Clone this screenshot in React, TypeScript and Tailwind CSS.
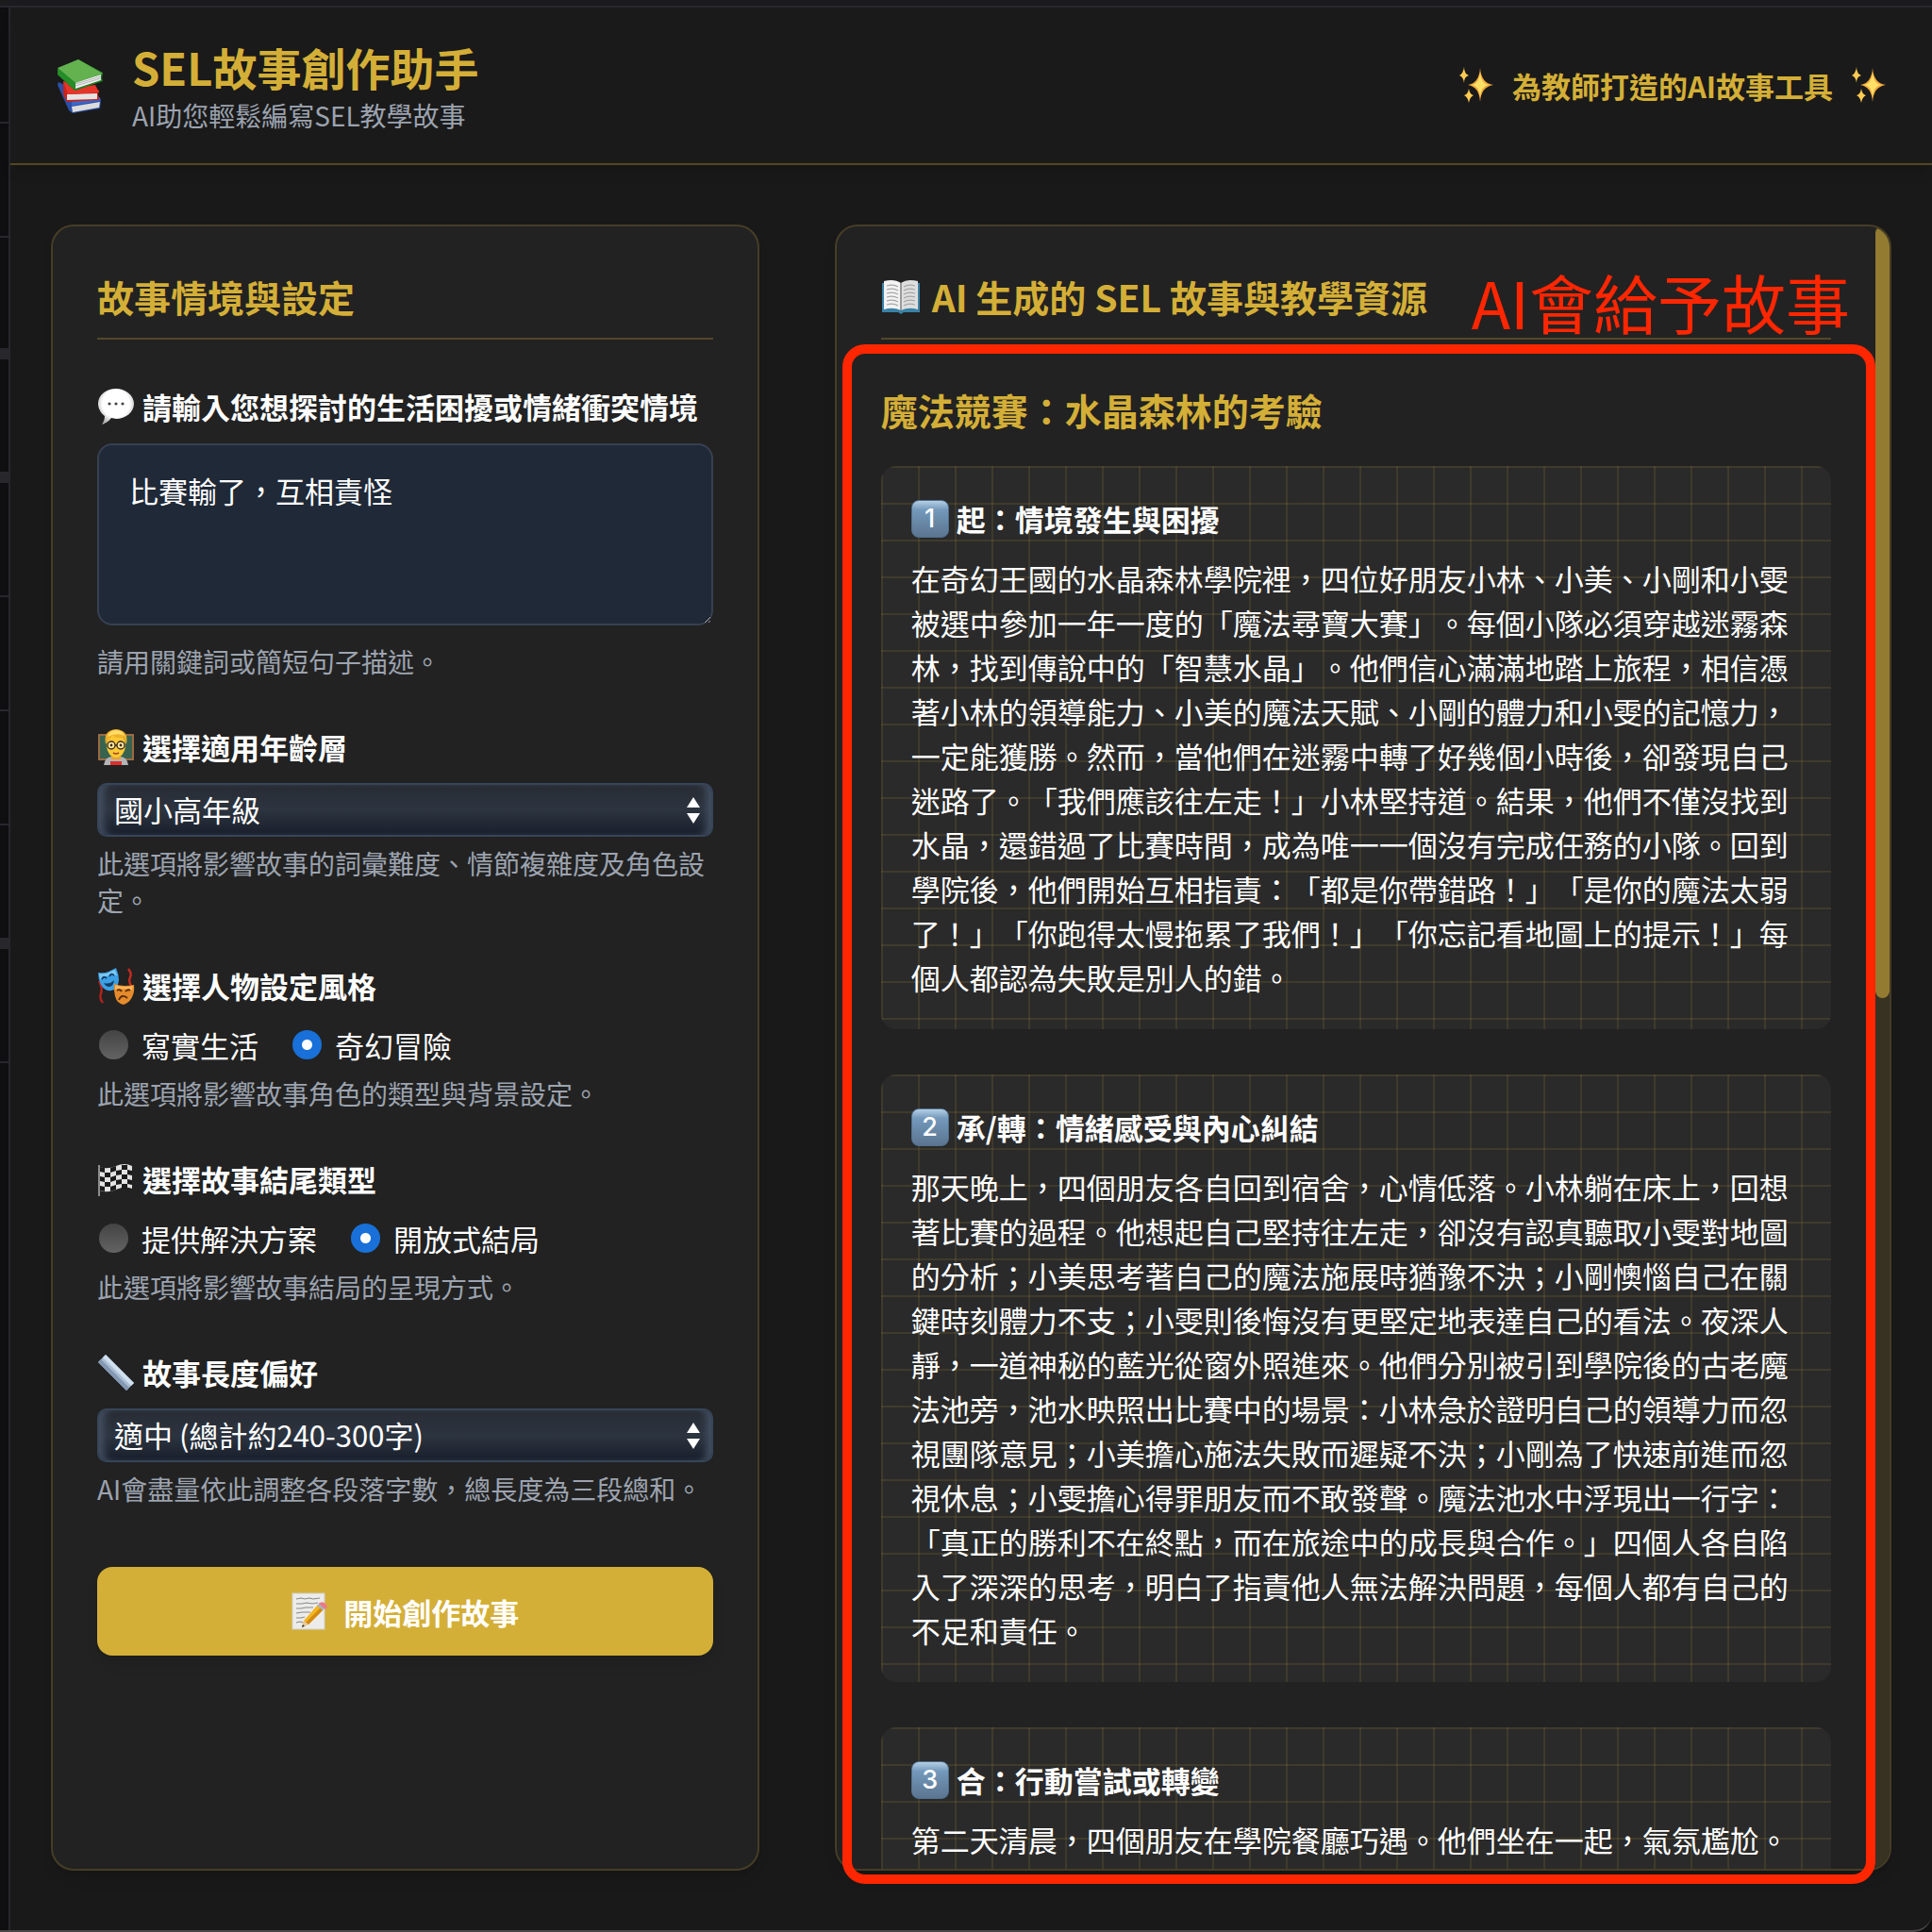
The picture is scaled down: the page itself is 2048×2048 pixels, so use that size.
import React, { useState } from 'react';

interface StorySection {
    step: string;
    title: string;
    content: string;
}

interface RadioOption {
    value: string;
    label: string;
}

const storySections: StorySection[] = [
    {
        step: '1',
        title: '起：情境發生與困擾',
        content:
            '在奇幻王國的水晶森林學院裡，四位好朋友小林、小美、小剛和小雯被選中參加一年一度的「魔法尋寶大賽」。每個小隊必須穿越迷霧森林，找到傳說中的「智慧水晶」。他們信心滿滿地踏上旅程，相信憑著小林的領導能力、小美的魔法天賦、小剛的體力和小雯的記憶力，一定能獲勝。然而，當他們在迷霧中轉了好幾個小時後，卻發現自己迷路了。「我們應該往左走！」小林堅持道。結果，他們不僅沒找到水晶，還錯過了比賽時間，成為唯一一個沒有完成任務的小隊。回到學院後，他們開始互相指責：「都是你帶錯路！」「是你的魔法太弱了！」「你跑得太慢拖累了我們！」「你忘記看地圖上的提示！」每個人都認為失敗是別人的錯。',
    },
    {
        step: '2',
        title: '承/轉：情緒感受與內心糾結',
        content:
            '那天晚上，四個朋友各自回到宿舍，心情低落。小林躺在床上，回想著比賽的過程。他想起自己堅持往左走，卻沒有認真聽取小雯對地圖的分析；小美思考著自己的魔法施展時猶豫不決；小剛懊惱自己在關鍵時刻體力不支；小雯則後悔沒有更堅定地表達自己的看法。夜深人靜，一道神秘的藍光從窗外照進來。他們分別被引到學院後的古老魔法池旁，池水映照出比賽中的場景：小林急於證明自己的領導力而忽視團隊意見；小美擔心施法失敗而遲疑不決；小剛為了快速前進而忽視休息；小雯擔心得罪朋友而不敢發聲。魔法池水中浮現出一行字：「真正的勝利不在終點，而在旅途中的成長與合作。」四個人各自陷入了深深的思考，明白了指責他人無法解決問題，每個人都有自己的不足和責任。',
    },
    {
        step: '3',
        title: '合：行動嘗試或轉變',
        content: '第二天清晨，四個朋友在學院餐廳巧遇。他們坐在一起，氣氛尷尬。',
    },
];

const characterStyles: RadioOption[] = [
    { value: 'real', label: '寫實生活' },
    { value: 'fantasy', label: '奇幻冒險' },
];

const endingTypes: RadioOption[] = [
    { value: 'solution', label: '提供解決方案' },
    { value: 'open', label: '開放式結局' },
];

const BooksIcon: React.FC = () => (
    <svg viewBox="0 0 58 58" className="size-[58px] shrink-0" aria-hidden="true">
        <path d="M4 25l38 17 7 2-1 9-29 5-4-3L3 28z" fill="#2c4fa8" />
        <path d="M18 51l30-5-1 6-28 5z" fill="#dcdcdc" />
        <path d="M18 50l29-5 2-2-3-3-28 5z" fill="#3a68c9" />
        <path d="M9 24l35 8 3 2-1 3 1 7-34 2-4-8z" fill="#c8231a" />
        <path d="M13 38l32-1v6l-32 1z" fill="#e4e4e4" />
        <path d="M9 24l5 14 33-2-4-8-20 3z" fill="#e5352a" />
        <path d="M3 11v6l17 16 2 1 29-10-1-3 1-6L25 1z" fill="#1f7d22" />
        <path d="M22 25l27-8v6L22 32z" fill="#eeeeee" />
        <path d="M22 27l27-8M22 29l27-8" stroke="#b5b5b5" strokeWidth="1" />
        <path d="M3 10L25 1l26 15-29 10z" fill="#63b14f" />
        <path d="M3 10l19 16-1 7L3 17z" fill="#248d27" />
    </svg>
);

const SparklesIcon: React.FC = () => (
    <svg viewBox="0 0 40 40" className="size-10 shrink-0" aria-hidden="true">
        <path d="M24 1q1 16 14 18-13 2-14 18-1-16-13-18Q23 17 24 1z" fill="#f3a83c" />
        <path d="M24 6q1 12 9 13-8 1-9 13-1-12-9-13 8-1 9-13z" fill="#ffe066" />
        <path d="M7 0q0 7 5 9-5 1-5 8-1-7-5-8 4-2 5-9z" fill="#ffcb52" />
        <path d="M12 23q1 6 5 7-4 2-5 8-1-6-5-8 4-1 5-7z" fill="#ffcb52" />
    </svg>
);

const SpeechIcon: React.FC = () => (
    <svg viewBox="0 0 40 40" className="size-10 shrink-0" aria-hidden="true">
        <defs>
            <radialGradient id="speech-fill" cx="50%" cy="42%" r="58%">
                <stop offset="0.65" stopColor="#ffffff" />
                <stop offset="1" stopColor="#b4b4b4" />
            </radialGradient>
        </defs>
        <path d="M20 1c10 0 19 7 19 16s-9 16-19 16l-5-1c-3 4-7 6-10 7 2-3 3-6 3-9C4 27 1 22 1 17 1 8 9 1 20 1z" fill="url(#speech-fill)" />
        <circle cx="13" cy="17" r="1.6" fill="#444444" />
        <circle cx="20" cy="17" r="1.6" fill="#444444" />
        <circle cx="27" cy="17" r="1.6" fill="#444444" />
    </svg>
);

const TeacherIcon: React.FC = () => (
    <svg viewBox="0 0 40 40" className="size-10 shrink-0" aria-hidden="true">
        <rect x="1" y="6" width="38" height="28" fill="#9b6b43" />
        <rect x="3" y="8" width="34" height="24" fill="#38634f" />
        <path d="M7 39q1-8 8-9h10q7 1 8 9z" fill="#b2b4b6" />
        <path d="M15 28h10v5H15z" fill="#eaa52c" />
        <path d="M14 35h12v4H14z" fill="#dd2f2b" />
        <ellipse cx="20" cy="18" rx="10" ry="13" fill="#fcc934" />
        <path d="M9 17Q6 2 20 1q14 1 11 16l-3-7q-9 1-12-3-2 5-5 6z" fill="#eeb02a" />
        <path d="M11 9q2-7 9-7 7 0 9 6-8-4-18 1z" fill="#ffdd66" />
        <circle cx="15" cy="18" r="4" fill="#ffe9a3" stroke="#3b2b1d" strokeWidth="1.4" />
        <circle cx="25" cy="18" r="4" fill="#ffe9a3" stroke="#3b2b1d" strokeWidth="1.4" />
        <path d="M19 18h2" stroke="#3b2b1d" strokeWidth="1.4" />
        <circle cx="15" cy="18" r="1.4" fill="#3b2b1d" />
        <circle cx="25" cy="18" r="1.4" fill="#3b2b1d" />
        <path d="M17 26q3 2 6 0" fill="none" stroke="#a2452a" strokeWidth="1.6" />
    </svg>
);

const MasksIcon: React.FC = () => (
    <svg viewBox="0 0 40 40" className="size-10 shrink-0" aria-hidden="true">
        <path d="M2 15q4 8 2 13t2 10" fill="none" stroke="#b5221a" strokeWidth="2.4" />
        <path d="M33 2q4 5 2 9t1 9" fill="none" stroke="#c92a1f" strokeWidth="2.4" />
        <path d="M1 6q7 1 11-1t8-4q3 7 3 13-1 10-8 11Q8 26 4 19 1 13 1 6z" fill="#3ba0e4" />
        <path d="M2 7q6 1 10-1t7-3l2 6Q11 8 3 13z" fill="#7cc9f6" />
        <path d="M5 13q2-4 5-1M13 10q2-4 5-1" fill="none" stroke="#123d66" strokeWidth="1.8" />
        <path d="M7 17q6 2 11-3-1 7-5 7t-6-4z" fill="#123d66" />
        <path d="M18 18q6 2 11 2t10-1q1 7-2 13t-9 8q-7-1-9-9-2-7-1-13z" fill="#e58b2c" />
        <path d="M19 19q6 2 10 2t9-1l-1 5q-8-3-18-1z" fill="#f8b65b" />
        <path d="M21 25q3-2 5 1M30 26q3-3 5-1M23 35q3-7 9-2" fill="none" stroke="#5b2c08" strokeWidth="1.8" />
    </svg>
);

const FlagIcon: React.FC = () => (
    <svg viewBox="0 0 40 40" className="size-10 shrink-0" aria-hidden="true">
        <path d="M2 5v33" stroke="#8d8d8d" strokeWidth="2" />
        <path d="M3 7q8 3 17-1t17 0v24q-8-3-17 1T3 32z" fill="#e2e2e2" />
        <path
            d="M3 7l5 1v5l-5-1zM14 8l6-2v5l-6 2zM26 5l6 0v5l-6 0zM8 13l6 0v5l-6 0zM20 11l6-1v5l-6 1zM32 10l5 1v5l-5-1zM3 17l5 1v5l-5-1zM14 18l6-2v5l-6 2zM26 15l6 0v5l-6 0zM8 23l6 0v5l-6 0zM20 21l6-1v5l-6 1zM32 20l5 1v5l-5-1zM3 27l5 1v5l-5-1zM14 28l6-2v5l-6 2zM26 25l6 0v5l-6 0z"
            fill="#1b1b1b"
        />
    </svg>
);

const RulerIcon: React.FC = () => (
    <svg viewBox="0 0 40 40" className="size-10 shrink-0" aria-hidden="true">
        <path d="M9 1l30 30-8 8L1 9z" fill="#a9bdd3" />
        <path d="M9 1l30 30-3 3L6 4z" fill="#cfdfee" />
        <path d="M1 9l3-3 30 30-3 3z" fill="#8398b2" />
    </svg>
);

const MemoIcon: React.FC = () => (
    <svg viewBox="0 0 40 40" className="size-10 shrink-0" aria-hidden="true">
        <rect x="2" y="1" width="34" height="38" fill="#ececea" stroke="#cfcfcc" strokeWidth="1" />
        <path d="M6 7l5-1 4 1 5-1 4 1 7-1M6 12l6 0 5-1 6 1 6-1M6 17l5 0 5-1 8 0M6 22l6-1 5 0 4 0M6 27l5 0 4-1M6 32l4-1 3 1" fill="none" stroke="#8a8a8a" strokeWidth="1.2" />
        <path d="M14 30l-2 7 7-3L35 18l-6-5z" fill="#f3b61f" />
        <path d="M16 32l16-16 3 2-16 16z" fill="#d18a12" />
        <path d="M14 30l-2 7 7-3z" fill="#e9c9a0" />
        <path d="M12 37l1-3 2 2z" fill="#333333" />
        <path d="M28 14l3-3 6 5-3 3z" fill="#a9b3bb" />
        <path d="M31 11q3-2 6 1t1 5l-1 1-7-6z" fill="#ea7b86" />
    </svg>
);

const OpenBookIcon: React.FC = () => (
    <svg viewBox="0 0 42 40" className="h-10 w-[42px] shrink-0" aria-hidden="true">
        <path d="M1 5h40v31H24l-3 2-3-2H1z" fill="#3a82a6" />
        <path d="M3 3q11-3 18 2v29q-8-4-18-1z" fill="#f3f3f3" />
        <path d="M39 3q-11-3-18 2v29q8-4 18-1z" fill="#dedede" />
        <path d="M21 5v29" stroke="#9a9a9a" strokeWidth="2" />
        <path d="M6 8q7-2 12 1M6 12q7-2 12 1M6 16q7-2 12 1M6 20q7-2 12 1M6 24q7-2 12 1M6 28q7-2 12 1M36 8q-7-2-12 1M36 12q-7-2-12 1M36 16q-7-2-12 1M36 20q-7-2-12 1M36 24q-7-2-12 1M36 28q-7-2-12 1" fill="none" stroke="#a6a6a6" strokeWidth="1.2" />
    </svg>
);

const Keycap: React.FC<{ children: React.ReactNode }> = ({ children }) => (
    <span className="flex size-10 shrink-0 items-center justify-center rounded-lg border border-[#4f6f8f] bg-linear-to-b from-[#b4cfe5] via-[#7499bb] via-25% to-[#5b7590] font-['Inter',sans-serif] text-[27px] leading-none font-medium text-white">
        {children}
    </span>
);

const HelpText: React.FC<{ id: string; children: React.ReactNode }> = ({ id, children }) => (
    <p id={id} className="text-[28px] leading-[39px] text-[#9ca3af]">
        {children}
    </p>
);

const labelClass = 'flex items-center gap-2 text-[31px] leading-[47px] font-bold text-white';

interface SelectFieldProps {
    id: string;
    value: string;
    options: string[];
    onChange: (value: string) => void;
}

const SelectField: React.FC<SelectFieldProps> = ({ id, value, options, onChange }) => (
    <div className="relative mt-[15px] mb-[9px]">
        <select
            id={id}
            value={value}
            aria-describedby={`${id}-help`}
            onChange={(e) => onChange(e.target.value)}
            className="block h-[57px] w-full appearance-none rounded-[10px] border-2 border-[#37455a] bg-linear-to-b from-[#282c34] from-0% via-[#2c3440] via-50% to-[#19202c] px-4 text-[31px] text-white shadow-[inset_10px_0_8px_-5px_#435062,inset_-10px_0_8px_-5px_#435062]"
        >
            {options.map((option) => (
                <option key={option}>{option}</option>
            ))}
        </select>
        <svg viewBox="0 0 14 28" className="pointer-events-none absolute top-[15px] right-[14px] h-7 w-[14px]" aria-hidden="true">
            <path d="M7 0l7 11H0zM7 28l7-11H0z" fill="#ffffff" />
        </svg>
    </div>
);

interface RadioGroupProps {
    name: string;
    icon: React.ReactNode;
    title: string;
    help: string;
    value: string;
    options: RadioOption[];
    onChange: (value: string) => void;
}

const RadioGroup: React.FC<RadioGroupProps> = ({ name, icon, title, help, value, options, onChange }) => (
    <fieldset aria-describedby={`${name}-help`}>
        <legend className={labelClass}>
            {icon}
            {title}
        </legend>
        <div className="mt-4 mb-[9px] flex gap-[34px]">
            {options.map((option) => (
                <label key={option.value} className="flex items-center gap-[14px] pl-[2px] text-[31px] leading-[47px] text-white">
                    <input
                        type="radio"
                        name={name}
                        value={option.value}
                        checked={value === option.value}
                        onChange={() => onChange(option.value)}
                        className="size-[31px] appearance-none rounded-full bg-linear-to-b from-[#444444] to-[#636363] checked:bg-[radial-gradient(circle,#ffffff_5px,#1870d8_6px)]"
                    />
                    {option.label}
                </label>
            ))}
        </div>
        <HelpText id={`${name}-help`}>{help}</HelpText>
    </fieldset>
);

const SideRail: React.FC = () => (
    <aside className="flex w-[11px] shrink-0 flex-col border-r-2 border-[#27272c] bg-[#0f0f11]">
        <div className="h-[123px] border-b-2 border-[#27272c]" />
        <div className="h-[121px] border-b-2 border-[#27272c]" />
        <div className="h-[129px] border-b-12 border-[#27272c]" />
        <div className="h-[131px] border-b-12 border-[#27272c]" />
        <div className="h-[121px] border-b-2 border-[#27272c]" />
        <div className="h-[121px] border-b-2 border-[#27272c]" />
        <div className="h-[121px] border-b-2 border-[#27272c]" />
        <div className="h-[131px] border-b-12 border-[#27272c]" />
        <div className="h-[121px] border-b-2 border-[#27272c]" />
    </aside>
);

const App: React.FC = () => {
    const [situation, setSituation] = useState('比賽輸了，互相責怪');
    const [age, setAge] = useState('國小高年級');
    const [style, setStyle] = useState('fantasy');
    const [ending, setEnding] = useState('open');
    const [length, setLength] = useState('適中 (總計約240-300字)');

    return (
        <div lang="zh-TW" className="bg-[#101010] font-['Noto_Sans_CJK_TC',sans-serif] [text-spacing-trim:space-all]">
            <div className="flex h-screen flex-col overflow-hidden rounded-br-[20px] border-b-2 border-[#4b4749] bg-[#191919]">
                <div className="h-2 shrink-0 border-b-2 border-[#27272c] bg-[#1b1b1e]" />
                <div className="flex min-h-0 flex-1">
                    <SideRail />
                    <div className="flex min-w-0 flex-1 flex-col">
                        <header className="flex items-center justify-between border-b-2 border-[#54461f] bg-[#1a1a1a] px-[47px] py-[31px] shadow-lg">
                            <div className="flex items-center gap-6">
                                <BooksIcon />
                                <div>
                                    <h1 className="text-[47px] leading-[64px] font-bold text-[#d4af37]">SEL故事創作助手</h1>
                                    <p className="text-[28px] leading-[39px] text-[#9ca3af]">AI助您輕鬆編寫SEL教學故事</p>
                                </div>
                            </div>
                            <p className="flex items-center gap-[18px] text-[31px] leading-[47px] font-bold text-[#d4af37]">
                                <SparklesIcon />
                                為教師打造的AI故事工具
                                <SparklesIcon />
                            </p>
                        </header>

                        <main className="grid min-h-0 flex-1 grid-cols-[67fr_100fr] gap-20 px-[43px] pt-[63px] pb-[63px]">
                            <section className="rounded-3xl border-2 border-[#463d26] bg-[#222222] p-[47px] shadow-lg">
                                <h2 className="border-b-2 border-[#54472a] pb-4 text-[39px] leading-[55px] font-bold text-[#d4af37]">故事情境與設定</h2>
                                <form className="mt-[47px] flex flex-col gap-[47px]" onSubmit={(e) => e.preventDefault()}>
                                    <div>
                                        <label htmlFor="situation" className={labelClass}>
                                            <SpeechIcon />
                                            請輸入您想探討的生活困擾或情緒衝突情境
                                        </label>
                                        <textarea
                                            id="situation"
                                            value={situation}
                                            aria-describedby="situation-help"
                                            onChange={(e) => setSituation(e.target.value)}
                                            className="mt-4 mb-[19px] block h-[193px] w-full resize-y rounded-2xl border-2 border-[#374151] bg-[#1f2937] px-8 py-6 text-[31px] leading-[47px] text-white"
                                        />
                                        <HelpText id="situation-help">請用關鍵詞或簡短句子描述。</HelpText>
                                    </div>
                                    <div>
                                        <label htmlFor="age" className={labelClass}>
                                            <TeacherIcon />
                                            選擇適用年齡層
                                        </label>
                                        <SelectField id="age" value={age} options={['國小低年級', '國小中年級', '國小高年級', '國中']} onChange={setAge} />
                                        <HelpText id="age-help">此選項將影響故事的詞彙難度、情節複雜度及角色設定。</HelpText>
                                    </div>
                                    <RadioGroup
                                        name="style"
                                        icon={<MasksIcon />}
                                        title="選擇人物設定風格"
                                        help="此選項將影響故事角色的類型與背景設定。"
                                        value={style}
                                        options={characterStyles}
                                        onChange={setStyle}
                                    />
                                    <RadioGroup
                                        name="ending"
                                        icon={<FlagIcon />}
                                        title="選擇故事結尾類型"
                                        help="此選項將影響故事結局的呈現方式。"
                                        value={ending}
                                        options={endingTypes}
                                        onChange={setEnding}
                                    />
                                    <div>
                                        <label htmlFor="length" className={labelClass}>
                                            <RulerIcon />
                                            故事長度偏好
                                        </label>
                                        <SelectField
                                            id="length"
                                            value={length}
                                            options={['簡短 (總計約150-200字)', '適中 (總計約240-300字)', '詳細 (總計約400-500字)']}
                                            onChange={setLength}
                                        />
                                        <HelpText id="length-help">AI會盡量依此調整各段落字數，總長度為三段總和。</HelpText>
                                    </div>
                                    <button
                                        type="submit"
                                        className="mt-4 flex h-[94px] items-center justify-center gap-4 rounded-2xl bg-[#d4af37] text-[31px] leading-[47px] font-bold text-white shadow-lg"
                                    >
                                        <MemoIcon />
                                        開始創作故事
                                    </button>
                                </form>
                            </section>

                            <div className="relative min-h-0">
                                <section className="flex h-full overflow-hidden rounded-3xl border-2 border-[#463d26] bg-[#222222] shadow-lg">
                                    <div className="min-w-0 flex-1 px-[47px] py-[47px]">
                                        <h2 className="flex items-center gap-3 border-b-2 border-[#54472a] pb-4 text-[39px] leading-[55px] font-bold text-[#d4af37]">
                                            <OpenBookIcon />
                                            AI 生成的 SEL 故事與教學資源
                                        </h2>
                                        <h3 className="mt-[47px] mb-8 text-[39px] leading-[55px] font-bold text-[#d4af37]">魔法競賽：水晶森林的考驗</h3>
                                        <div className="flex flex-col gap-12">
                                            {storySections.map((section) => (
                                                <article
                                                    key={section.step}
                                                    className="rounded-2xl bg-[#2a2a2a] bg-[linear-gradient(rgba(212,175,55,0.12)_2px,transparent_2px),linear-gradient(90deg,rgba(212,175,55,0.12)_2px,transparent_2px)] bg-size-[39px_39px] p-8"
                                                >
                                                    <h4 className="mb-4 flex items-center gap-2 text-[31px] leading-[47px] font-bold text-white">
                                                        <Keycap>{section.step}</Keycap>
                                                        {section.title}
                                                    </h4>
                                                    <p className="text-[31px] leading-[47px] text-white">{section.content}</p>
                                                </article>
                                            ))}
                                        </div>
                                    </div>
                                    <div className="w-[15px] shrink-0 bg-[#383223]">
                                        <div className="h-[47%] rounded-full bg-[#937b31]" />
                                    </div>
                                </section>

                                {/* callout drawn over the result panel */}
                                <div className="pointer-events-none absolute top-[127px] right-[17px] -bottom-[14px] left-2 rounded-3xl border-10 border-[#ff2600]" />
                                <p className="pointer-events-none absolute top-12 right-[44px] text-[68px] leading-[68px] whitespace-nowrap text-[#ff2600]">AI會給予故事</p>
                            </div>
                        </main>
                    </div>
                </div>
            </div>
        </div>
    );
};

export default App;
